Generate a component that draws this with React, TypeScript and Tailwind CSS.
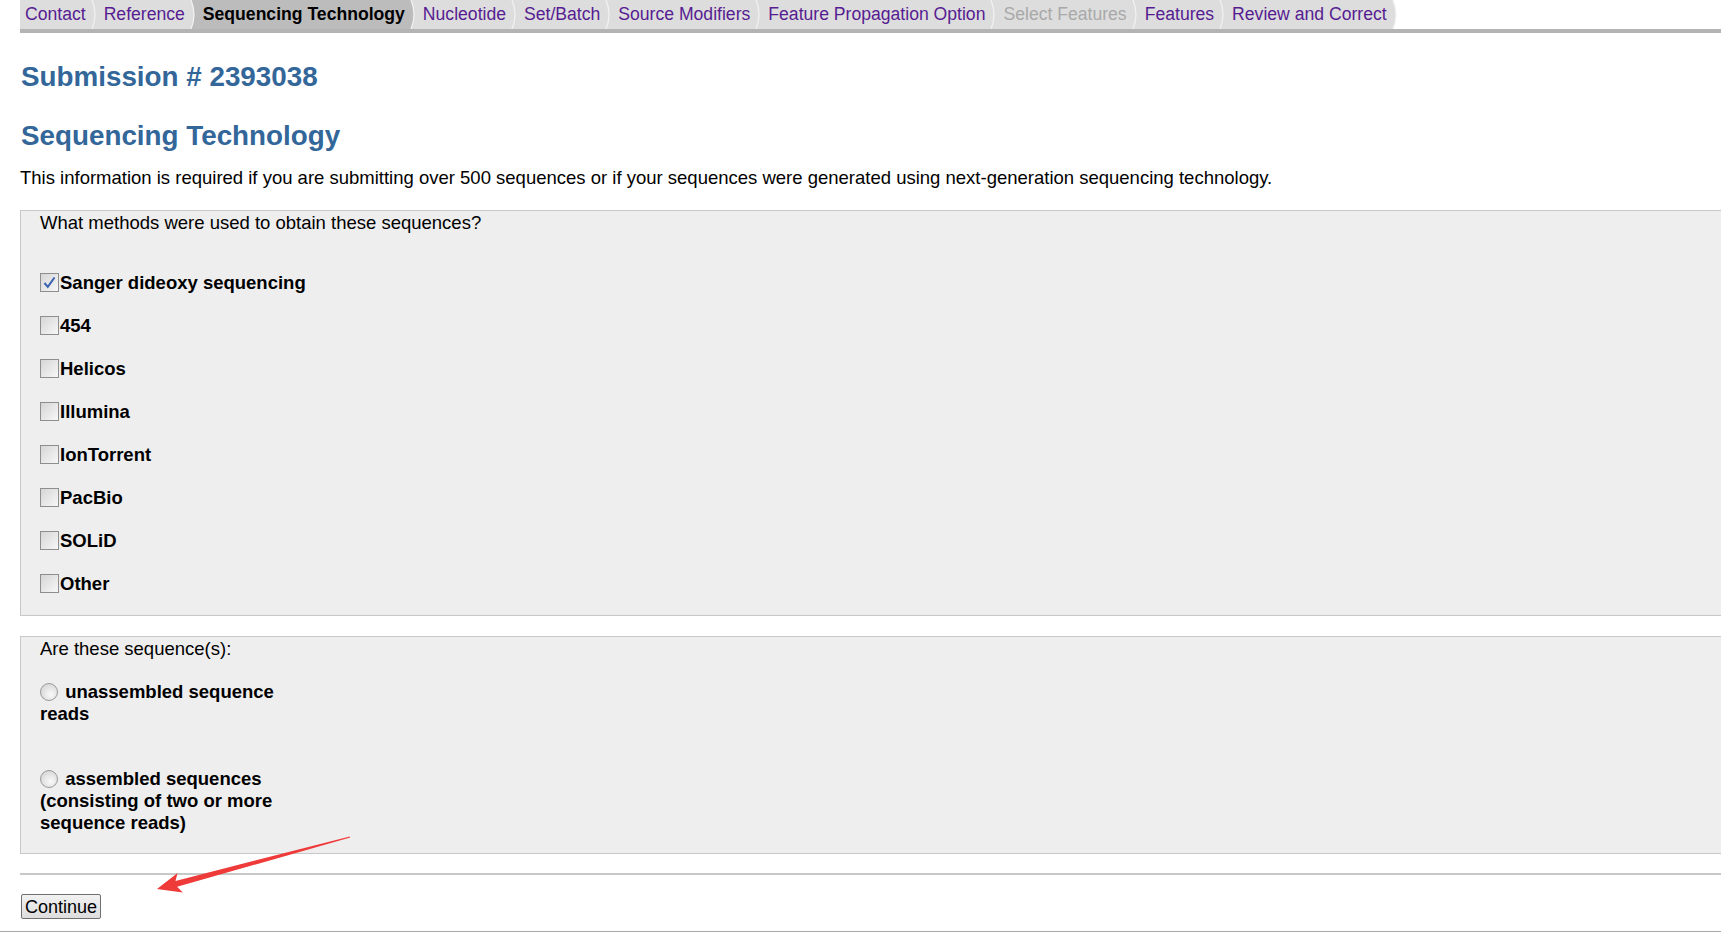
type TabState = "link" | "active" | "disabled"

type Tab = {
  label: string
  state: TabState
}

const tabs: Tab[] = [
  { label: "Contact", state: "link" },
  { label: "Reference", state: "link" },
  { label: "Sequencing Technology", state: "active" },
  { label: "Nucleotide", state: "link" },
  { label: "Set/Batch", state: "link" },
  { label: "Source Modifiers", state: "link" },
  { label: "Feature Propagation Option", state: "link" },
  { label: "Select Features", state: "disabled" },
  { label: "Features", state: "link" },
  { label: "Review and Correct", state: "link" },
]

const methods = [
  { label: "Sanger dideoxy sequencing", checked: true },
  { label: "454", checked: false },
  { label: "Helicos", checked: false },
  { label: "Illumina", checked: false },
  { label: "IonTorrent", checked: false },
  { label: "PacBio", checked: false },
  { label: "SOLiD", checked: false },
  { label: "Other", checked: false },
]

function TabItem({ tab, next }: { tab: Tab; next?: Tab }) {
  const active = tab.state === "active"
  // the edge svg sits on the next tab's colour, or white after the last one
  const edgeBg = !next ? "bg-white" : next.state === "active" ? "bg-[#bcbcbc]" : "bg-[#dddddd]"

  return (
    <div className="flex h-[29px]">
      <div
        className={`flex items-center pl-[5px] pr-[3px] ${
          active ? "bg-[#bcbcbc] font-bold text-black" : "bg-[#dddddd]"
        } ${tab.state === "link" ? "text-[#561c91]" : ""} ${tab.state === "disabled" ? "text-[#a9a9a9]" : ""}`}
      >
        <span className="text-[17.6px] leading-none whitespace-nowrap">{tab.label}</span>
      </div>
      <svg width="10" height="29" viewBox="0 0 10 29" className={edgeBg}>
        <path
          d="M0 0 L3 0 Q9 14.5 3 29 L0 29 Z"
          className={active ? "fill-[#bcbcbc]" : "fill-[#dddddd]"}
        />
        <path d="M3 0 Q9 14.5 3 29" fill="none" stroke="#f2f2f2" strokeWidth="1.2" />
      </svg>
    </div>
  )
}

function Checkbox({ checked }: { checked: boolean }) {
  return (
    <span className="flex h-[19px] w-[19px] shrink-0 items-center justify-center border border-[#8e8e8e] bg-gradient-to-br from-[#d6d6d6] to-[#f7f7f7]">
      {checked && (
        <svg width="15" height="15" viewBox="0 0 15 15">
          <path d="M2.5 8 L5.8 11.8 L12.5 2.5" fill="none" stroke="#3a62b0" strokeWidth="2" />
        </svg>
      )}
    </span>
  )
}

function Radio() {
  return (
    <span className="mr-[2px] inline-block h-[18px] w-[18px] rounded-full border border-[#9a9a9a] bg-[radial-gradient(circle_at_60%_65%,#fafafa,#cdcdcd)] align-[-3px]" />
  )
}

export default function App() {
  return (
    <div className="relative min-h-[932px] overflow-hidden bg-white font-['Liberation_Sans',Arial,sans-serif] text-black">
      {/* Step tabs */}
      <div className="pl-[20px]">
        <div className="flex">
          {tabs.map((tab, idx) => (
            <TabItem key={tab.label} tab={tab} next={tabs[idx + 1]} />
          ))}
        </div>
        <div className="h-[4px] bg-[#b4b4b4]" />
      </div>

      <div className="pl-[20px]">
        <h2 className="mt-[28px] pl-[1px] text-[27.8px] font-bold leading-[32px] text-[#336699]">
          Submission # 2393038
        </h2>
        <h2 className="mt-[27px] pl-[1px] text-[27.8px] font-bold leading-[32px] text-[#336699]">
          Sequencing Technology
        </h2>
        <p className="mt-[15px] text-[18.5px] leading-[22px]">
          This information is required if you are submitting over 500 sequences or if your sequences were
          generated using next-generation sequencing technology.
        </p>

        {/* Methods */}
        <div className="mt-[21px] border border-r-0 border-[#c8c8c8] bg-[#eeeeee] pb-[10px] pl-[19px] pt-[1px]">
          <div className="text-[18.5px] leading-[22px]">What methods were used to obtain these sequences?</div>
          <div className="mt-[27px]">
            {methods.map((m) => (
              <div key={m.label} className="flex h-[43px] items-center gap-[1px]">
                <Checkbox checked={m.checked} />
                <span className="text-[18.5px] font-bold leading-[22px]">{m.label}</span>
              </div>
            ))}
          </div>
        </div>

        {/* Assembly type */}
        <div className="mt-[20px] border border-r-0 border-[#c8c8c8] bg-[#eeeeee] pb-[19px] pl-[19px] pt-[1px]">
          <div className="text-[18.5px] leading-[22px]">Are these sequence(s):</div>
          <div className="mt-[21px] w-[250px] text-[18.5px] font-bold leading-[22px]">
            <Radio /> unassembled sequence reads
          </div>
          <div className="mt-[43px] w-[250px] text-[18.5px] font-bold leading-[22px]">
            <Radio /> assembled sequences (consisting of two or more sequence reads)
          </div>
        </div>

        <div className="mt-[19px] h-[2px] bg-[#c8c8c8]" />

        <button className="ml-[1px] mt-[19px] h-[25px] rounded-[2px] border border-[#707070] bg-gradient-to-b from-[#f2f2f2] to-[#dddddd] px-[3px] text-[18px] leading-none text-black">
          Continue
        </button>
      </div>

      <div className="mt-[11px] h-[2px] bg-[#a8a8a8]" />

      {/* annotation arrow */}
      <svg className="pointer-events-none absolute left-0 top-0" width="1721" height="932">
        <polygon
          points="157,889 177.6,873.1 175.5,880.9 349.8,836.4 350.2,837.6 177.1,886.7 182.8,892.5"
          fill="#ef3a3a"
        />
      </svg>
    </div>
  )
}
